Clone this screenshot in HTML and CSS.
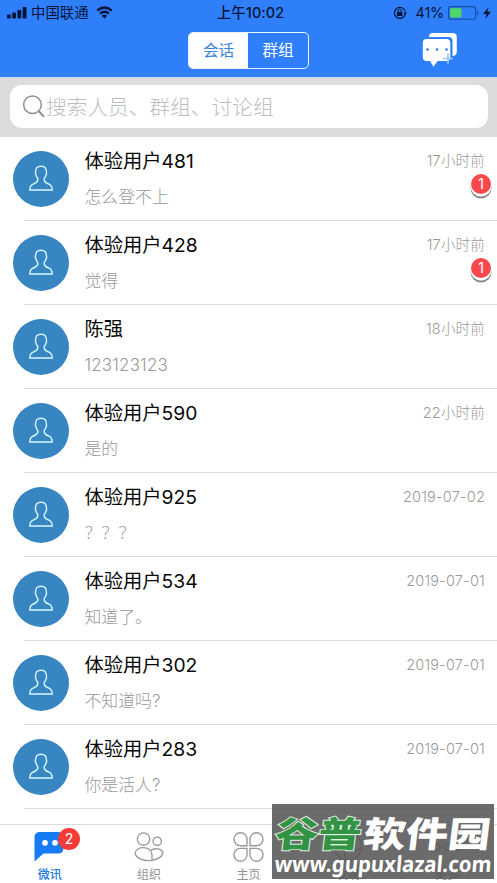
FILE: index.html
```html
<!DOCTYPE html>
<html lang="zh-CN">
<head>
<meta charset="utf-8">
<title>微讯</title>
<link rel="stylesheet" href="styles.css">
</head>
<body>
<svg class="defs" width="0" height="0">
  <symbol id="person" viewBox="0 0 24 26">
    <path d="M8.800 15V13.200C7.400 12 7 10.800 6.900 9.600C6.300 9 6.200 7.800 6.700 7C6.300 3.200 8.300 1.200 12 1.200C15.700 1.200 17.700 3.200 17.300 7C17.800 7.800 17.700 9 17.100 9.600C17 10.800 16.600 12 15.200 13.200V15C15.200 17.300 17.500 18 20 19.200C22.300 20.300 23.200 21.700 23.200 25H.8C.8 21.700 1.700 20.300 4 19.200C6.500 18 8.800 17.300 8.800 15Z" fill="none" stroke="#d5f8ff" stroke-width="1.400"/>
  </symbol>
</svg>
<div class="app">
  <header class="header">
    <div class="status">
      <div class="carrier">
        <svg width="20" height="13" viewBox="0 0 20 13" fill="#06143a"><rect x="0" y="8.500" width="3.800" height="4" rx="1"/><rect x="5.200" y="6.500" width="3.800" height="6" rx="1"/><rect x="10.400" y="4" width="3.800" height="8.500" rx="1"/><rect x="15.600" y="1" width="3.900" height="11.500" rx="1"/></svg>
        <span>中国联通</span>
        <svg class="wifi" width="17" height="13" viewBox="0 0 17 13"><path d="M1.200 4.600Q8.500-1.700 15.800 4.600M4 7.700Q8.500 3.700 13 7.700" fill="none" stroke="#06143a" stroke-width="2.300"/><path d="M5.800 9.800Q8.500 7.700 11.200 9.800L8.500 12.500Z" fill="#06143a"/></svg>
      </div>
      <div class="clock">上午10:02</div>
      <div class="power">
        <svg width="14" height="14" viewBox="0 0 14 14"><path d="M12.200 8.500A5.500 5.500 0 1 1 12.300 5.600" fill="none" stroke="#06143a" stroke-width="1.200"/><path d="M10.600 6.400H14L12.200 8.900Z" fill="#06143a"/><rect x="4" y="6" width="5.400" height="4" rx=".5" fill="#06143a"/><path d="M5 6.200V5a1.700 1.700 0 0 1 3.400 0V6.200" fill="none" stroke="#06143a"/></svg>
        <span class="percent">41%</span>
        <svg width="31" height="14" viewBox="0 0 31 14"><rect x=".6" y=".6" width="27" height="12.600" rx="2.500" fill="none" stroke="#174d9d" stroke-width="1.100"/><rect x="2.200" y="2.200" width="11.200" height="9.400" rx="1" fill="#4cd964"/><path d="M29 4.500Q31.500 7 29 9.500Z" fill="#174d9d"/></svg>
        <svg class="bolt" width="8" height="12" viewBox="0 0 8 12"><path d="M5.700 0L0 7H3.600L2.200 12L8 4.800H4.300Z" fill="#06143a"/></svg>
      </div>
    </div>
    <div class="nav">
      <div class="segment"><span class="seg on">会话</span><span class="seg">群组</span></div>
      <svg class="compose" width="36" height="36" viewBox="0 0 36 36"><path d="M7 4.500Q7.200 1 11 1H30.500Q34.800 1 34.800 5V19.500Q34.800 23.800 30.500 24V9Q30.500 5 26.500 5H7Z" fill="#fff"/><path d="M4.500 7H24.500Q28.300 7 28.300 11V25Q28.300 29 24.500 29H15.500L11.500 34.800L8 29H4.500Q.8 29 .8 25V11Q.8 7 4.500 7Z" fill="#fff"/><g fill="#327bdd"><circle cx="5.500" cy="17.500" r="1.300"/><circle cx="15" cy="17.500" r="1.300"/><circle cx="24.500" cy="17.500" r="1.300"/></g><path d="M26 21.500V31.500M21 26.500H31" stroke="#9fc3f6" stroke-width="1.700"/></svg>
    </div>
  </header>
  <div class="search-band">
    <div class="search">
      <svg width="23" height="23" viewBox="0 0 23 23" fill="none" stroke="#8f8f94"><circle cx="9.500" cy="9.800" r="8.800" stroke-width="1.500"/><path d="M15.800 16.200L21 21.800" stroke-width="2"/></svg>
      <span>搜索人员、群组、讨论组</span>
    </div>
  </div>
  <main class="list">
    <div class="row"><div class="avatar"><svg><use href="#person"/></svg></div><div class="content"><div class="name">体验用户481</div><div class="preview">怎么登不上</div></div><div class="meta"><time>17小时前</time><span class="unread">1</span></div></div>
    <div class="row"><div class="avatar"><svg><use href="#person"/></svg></div><div class="content"><div class="name">体验用户428</div><div class="preview">觉得</div></div><div class="meta"><time>17小时前</time><span class="unread">1</span></div></div>
    <div class="row"><div class="avatar"><svg><use href="#person"/></svg></div><div class="content"><div class="name">陈强</div><div class="preview digits">123123123</div></div><div class="meta"><time>18小时前</time></div></div>
    <div class="row"><div class="avatar"><svg><use href="#person"/></svg></div><div class="content"><div class="name">体验用户590</div><div class="preview">是的</div></div><div class="meta"><time>22小时前</time></div></div>
    <div class="row"><div class="avatar"><svg><use href="#person"/></svg></div><div class="content"><div class="name">体验用户925</div><div class="preview">？？？</div></div><div class="meta"><time>2019-07-02</time></div></div>
    <div class="row"><div class="avatar"><svg><use href="#person"/></svg></div><div class="content"><div class="name">体验用户534</div><div class="preview">知道了。</div></div><div class="meta"><time>2019-07-01</time></div></div>
    <div class="row"><div class="avatar"><svg><use href="#person"/></svg></div><div class="content"><div class="name">体验用户302</div><div class="preview">不知道吗?</div></div><div class="meta"><time>2019-07-01</time></div></div>
    <div class="row"><div class="avatar"><svg><use href="#person"/></svg></div><div class="content"><div class="name">体验用户283</div><div class="preview">你是活人?</div></div><div class="meta"><time>2019-07-01</time></div></div>
  </main>
  <nav class="tabs">
    <div class="tab active">
      <svg width="30" height="30" viewBox="0 0 30 30"><path d="M6 0H24Q29.500 0 29.500 5.500V16Q29.500 21.500 24 21.500H9.500L.5 29.500V5.500Q.5 0 6 0Z" fill="#167bf5"/><g fill="#fff"><circle cx="11" cy="10.800" r="2.900"/><circle cx="21" cy="10.800" r="2.900"/></g></svg>
      <span>微讯</span><b class="badge">2</b>
    </div>
    <div class="tab">
      <svg width="30" height="30" viewBox="0 0 30 30" fill="none" stroke="#999" stroke-width="1.350"><circle cx="9.500" cy="7" r="6.200"/><circle cx="23.200" cy="9.300" r="4.200"/><path d="M18 28.300C10 29.500 3 27 1 21.500C1.500 17 6 15.400 9.500 15.600C14 15.700 17.500 18.500 18 22.500V28.300C24 27.500 28 25 29 20.500C27.500 16.500 21 15.500 16.300 18.500"/></svg>
      <span>组织</span>
    </div>
    <div class="tab">
      <svg width="31" height="30" viewBox="0 0 31 30" fill="none" stroke="#999" stroke-width="1.350"><path d="M14 13.700H7.300A6.500 6.500 0 1 1 14 7.200ZM17 13.700V7.200A6.500 6.500 0 1 1 23.700 13.700ZM14 16.300V22.800A6.500 6.500 0 1 1 7.300 16.300ZM17 16.300H23.700A6.500 6.500 0 1 1 17 22.800Z"/></svg>
      <span>主页</span>
    </div>
    <div class="tab">
      <svg width="30" height="30" viewBox="0 0 30 30" fill="none" stroke="#999" stroke-width="1.300"><circle cx="15" cy="15" r="13.500"/><path d="M15 1.500Q22 8 15 15Q8 22 15 28.500M1.500 15Q8 8 15 15Q22 22 28.500 15"/></svg>
      <span>发现</span>
    </div>
    <div class="tab">
      <svg width="30" height="30" viewBox="0 0 30 30" fill="none" stroke="#999" stroke-width="1.300"><circle cx="5" cy="15" r="3"/><circle cx="15" cy="15" r="3"/><circle cx="25" cy="15" r="3"/></svg>
      <span>更多</span>
    </div>
  </nav>
  <div class="watermark">
    <svg width="222" height="75" viewBox="0 0 222 75">
      <g transform="translate(0 43) skewX(-7) scale(1 .93)">
        <text class="wm-green" x="2" y="0" textLength="86" lengthAdjust="spacingAndGlyphs">谷普</text>
        <text class="wm-white" x="90" y="0" textLength="127" lengthAdjust="spacingAndGlyphs">软件园</text>
      </g>
      <g transform="translate(0 67.500) skewX(-5)">
        <text class="wm-url" x="2" y="0" textLength="217" lengthAdjust="spacingAndGlyphs">www.gupuxlazal.com</text>
      </g>
    </svg>
  </div>
</div>
</body>
</html>
```
FILE: styles.css
```css
* { box-sizing: border-box; }
body { margin: 0; background: #fff; font-family: Inter, "Noto Sans CJK SC", sans-serif; }
svg { display: block; flex: none; }
.defs { position: absolute; }
.app { position: relative; width: 497px; height: 883px; overflow: hidden; display: flex; flex-direction: column; background: #fff; }

.header { height: 77px; background: #2f7ffa; flex: none; }
.status { height: 25px; display: grid; grid-template-columns: 1fr auto 1fr; align-items: center; color: #06143a; font-size: 14.400px; line-height: 24px; }
.carrier { display: flex; align-items: center; padding-left: 7px; }
.carrier span { margin-left: 4px; }
.wifi { margin-left: 7px; }
.clock { font-weight: 500; padding-left: 4px; letter-spacing: .1px; }
.power { display: flex; align-items: center; justify-content: flex-end; padding-right: 6px; }
.percent { margin: 0 4px 0 9px; letter-spacing: -.2px; }
.bolt { margin-left: 4px; }
.nav { height: 52px; position: relative; display: flex; justify-content: center; padding: 7px 0 0; }
.segment { width: 121px; height: 37px; border: 1.500px solid #e9f4ff; border-radius: 5px; display: flex; overflow: hidden; }
.seg { flex: 1; text-align: center; font-size: 15.600px; line-height: 36px; color: #fff; }
.seg.on { flex: 0 0 59px; background: #fff; color: #3a83d8; }
.compose { position: absolute; left: 422px; top: 7px; }

.search-band { height: 60px; flex: none; background: #dcdcdc; padding: 7px 9px 0 10px; border-top: 1px solid #cfd8ea; }
.search { height: 43px; border-radius: 12px; background: #fff; display: flex; align-items: center; padding-left: 13px; color: #bdbdc3; font-size: 20.700px; line-height: 43px; font-weight: 300; }
.search span { padding-top: 1px; }

.list { flex: none; height: 687px; }
.row { position: relative; height: 84px; display: flex; padding: 14px 12px 0 13.400px; }
.row::after { content: ""; position: absolute; left: 24px; right: 0; bottom: 0; height: 1px; background: #dedede; }
.avatar { width: 56px; height: 56px; margin-top: -.4px; border-radius: 50%; background: #3785c1; flex: none; display: flex; justify-content: center; padding-top: 14.400px; }
.avatar svg { width: 24px; height: 26px; }
.content { flex: 1; margin-left: 15px; }
.name { font-size: 19.300px; line-height: 26px; margin-top: -3px; color: #080808; }
.preview { font-size: 16.900px; line-height: 24px; margin-top: 11px; color: #999; font-weight: 300; }
.digits { letter-spacing: .2px; }
.meta { font-size: 14.500px; line-height: 22px; margin-top: -1px; color: #999; font-weight: 300; letter-spacing: .2px; display: flex; flex-direction: column; align-items: flex-end; }
.unread { width: 20px; height: 20px; margin: 2px -6px 0 0; border-radius: 50%; background: #f9484d; color: #fff; font-size: 14px; line-height: 19px; text-align: center; letter-spacing: 0; font-weight: 400; box-shadow: 0 2px 0 .5px #fff, 0 4px 0 .5px #888; }

.tabs { height: 59px; flex: none; border-top: 1px solid #dcdcdc; background: #fff; display: flex; }
.tab { position: relative; flex: 1; display: flex; flex-direction: column; align-items: center; padding-top: 7px; color: #929292; font-size: 12px; line-height: 18px; }
.tab span { margin-top: 4px; }
.tab.active { color: #2079dc; font-weight: 500; }
.tab.active svg { margin-right: 1px; }
.badge { position: absolute; left: 58px; top: 3px; width: 22px; height: 22px; border-radius: 50%; background: #f33c38; color: #fff; font-weight: 400; font-size: 14px; line-height: 22px; text-align: center; }

.watermark { position: absolute; left: 272px; top: 804px; width: 222px; height: 75px; background: rgba(85, 85, 85, .87); }
.wm-green, .wm-white { font-family: "Noto Sans CJK SC", sans-serif; font-weight: 900; font-size: 38px; }
.wm-green { fill: #329344; stroke: #e4f2e4; stroke-width: 2px; paint-order: stroke; }
.wm-white { fill: #fff; }
.wm-url { font-family: "Noto Sans", "Open Sans", sans-serif; font-weight: 700; font-size: 22px; fill: #fff; }
```
